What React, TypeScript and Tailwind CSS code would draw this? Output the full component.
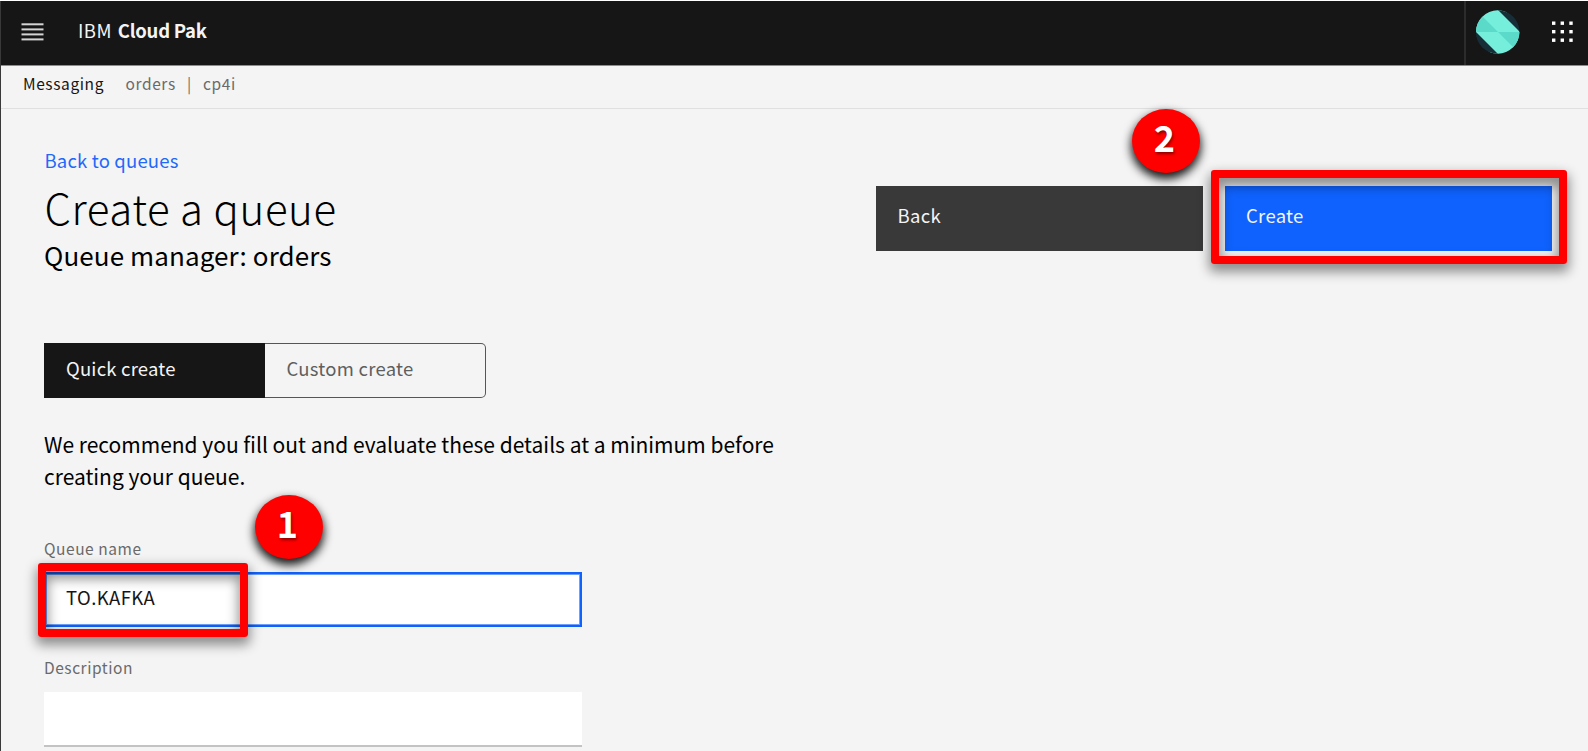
import type { ReactNode } from 'react';

const gridDots = [22, 30.5, 39].flatMap((y) => [1, 9.6, 18.3].map((x) => ({ x, y: y - 21.5 })));

function Header() {
  return (
    <header className="flex h-[65px] items-stretch border-b border-[#8d8d8d] bg-[#161616]">
      <button className="flex w-[64px] items-start pl-[20px] pt-[22px]" aria-label="Menu">
        <svg width="23" height="18" viewBox="0 0 23 18" fill="#d4d4d4">
          <rect x="0.5" y="0.3" width="22" height="2" />
          <rect x="0.5" y="5.4" width="22" height="2" />
          <rect x="0.5" y="10.4" width="22" height="2" />
          <rect x="0.5" y="15.4" width="22" height="2" />
        </svg>
      </button>
      <div className="flex flex-1 items-center gap-[6px] pb-[6px] pl-[13px] text-[18.5px] leading-[24px] text-[#f4f4f4]">
        <span className="tracking-[0.4px]">IBM</span>
        <span className="font-bold tracking-[-0.25px]">Cloud Pak</span>
      </div>
      <div className="flex w-[124px] items-start border-l-2 border-[#2c2c2c] pl-[9px] pt-[8px]">
        <svg width="46" height="46" viewBox="0 0 46 46">
          <defs>
            <clipPath id="avatar">
              <circle cx="22.7" cy="23" r="21.7" />
            </clipPath>
          </defs>
          <g clipPath="url(#avatar)">
            <rect width="46" height="46" fill="#172d38" />
            <path d="M-10 -9H23L45 23.3V56H23L1 23.3z" fill="#75eedb" />
            <path d="M23 1L45 23V0z" fill="#172d38" />
            <path d="M1 23L23 45H0z" fill="#172d38" />
            <path d="M1 23V1L23 23z" fill="#5bd9c9" />
            <path d="M45 23V45L23 23z" fill="#5bd9c9" />
          </g>
        </svg>
        <svg className="ml-[30px] mt-[12px]" width="24" height="24" viewBox="0 0 24 24" fill="#ffffff">
          {gridDots.map((d) => (
            <rect key={`${d.x}-${d.y}`} x={d.x} y={d.y} width="3.4" height="3.4" />
          ))}
        </svg>
      </div>
    </header>
  );
}

function Callout({ children, className }: { children: ReactNode; className: string }) {
  return (
    <div
      className={`absolute flex h-[64px] w-[68px] justify-center rounded-[50%] bg-[#ff0000] pr-[3px] pt-[5px] font-['Noto_Sans_CJK_SC'] text-[36px] font-bold leading-[44px] text-white shadow-[0_5px_10px_1px_rgba(0,0,0,0.9)] [text-shadow:1px_2px_3px_rgba(0,0,0,0.45)] ${className}`}
    >
      {children}
    </div>
  );
}

function Highlight({ className }: { className: string }) {
  return (
    <div
      className={`pointer-events-none absolute rounded-[3px] border-8 border-[#ff0000] shadow-[0_6px_12px_2px_rgba(0,0,0,0.42),inset_0_6px_12px_2px_rgba(0,0,0,0.42)] ${className}`}
    />
  );
}

export default function App() {
  return (
    <div className="h-[751px] overflow-hidden bg-white pt-px font-['Noto_Sans_CJK_SC',sans-serif] text-black">
      <div className="h-[750px] border-l border-[#393939] bg-[#f4f4f4]">
        <Header />
        <nav className="flex h-[43px] items-center border-b border-[#e0e0e0] pb-[8px] pl-[22px] text-[15.5px] leading-[20px] tracking-[0.6px] text-[#6a6a6a]">
          <span className="w-[102.5px] text-[#161616]">Messaging</span>
          <span className="w-[61.5px]">orders</span>
          <span className="w-[16px]">|</span>
          <span>cp4i</span>
        </nav>

        <main className="flex">
          <section className="w-[831px] pl-[43px] pt-[39px]">
            <a className="ml-[0.5px] block text-[18.5px] leading-[24px] tracking-[0.18px] text-[#2268fa]">Back to queues</a>
            <h1 className="ml-[0.5px] mt-[11px] text-[42px] font-light leading-[48px] tracking-[0.6px]">Create a queue</h1>
            <h2 className="mt-[8px] text-[26px] leading-[32px] tracking-[0.1px]">Queue manager: orders</h2>

            <div className="mt-[72px] flex h-[55px] w-[442px] text-[18.5px] leading-[24px] tracking-[0.2px]">
              <button className="flex w-[221px] items-center bg-[#161616] pb-[5px] pl-[22px] text-[#f4f4f4]">
                Quick create
              </button>
              <button className="flex w-[221px] items-center rounded-r-[5px] border border-l-0 border-[#565656] pb-[5px] pl-[21.5px] tracking-[0.25px] text-[#5f5f5f]">
                Custom create
              </button>
            </div>

            <p className="mt-[30px] w-[760px] text-[21px] leading-[32px]">
              We recommend you fill out and evaluate these details at a minimum before creating your queue.
            </p>

            <label className="mt-[46px] block text-[15.5px] leading-[20px] tracking-[0.55px] text-[#6a6a6a]">
              Queue name
            </label>
            <div className="relative mt-[14px] flex h-[55px] w-[538px] items-center border-2 border-[#0f62fe] bg-white pb-[6px] pl-[20px] text-[18.5px] leading-[24px] tracking-[0.45px] text-[#161616] shadow-[inset_0_0_0_1px_#6f9ffb]">
              TO.KAFKA
              <Highlight className="left-[-8px] top-[-11px] h-[74px] w-[210px]" />
              <Callout className="left-[209px] top-[-79px]">1</Callout>
            </div>

            <label className="mt-[30px] block text-[15.5px] leading-[20px] tracking-[0.55px] text-[#6a6a6a]">
              Description
            </label>
            <div className="mt-[15px] h-[55px] w-[538px] border-b-2 border-[#c3c3c3] bg-white" />
          </section>

          <section className="flex gap-[22px] pl-[44px] pt-[77px] text-[18.5px] leading-[24px] tracking-[0.3px] text-[#f4f4f4]">
            <button className="flex h-[65px] w-[327px] items-center bg-[#393939] pb-[7px] pl-[21.5px]">Back</button>
            <div className="relative h-[65px] w-[327px]">
              <button className="flex h-full w-full items-center bg-[#0f62fe] pb-[7px] pl-[21px]">Create</button>
              <Highlight className="left-[-14px] top-[-16px] h-[94px] w-[356px]" />
              <Callout className="left-[-93px] top-[-77px]">2</Callout>
            </div>
          </section>
        </main>
      </div>
    </div>
  );
}
